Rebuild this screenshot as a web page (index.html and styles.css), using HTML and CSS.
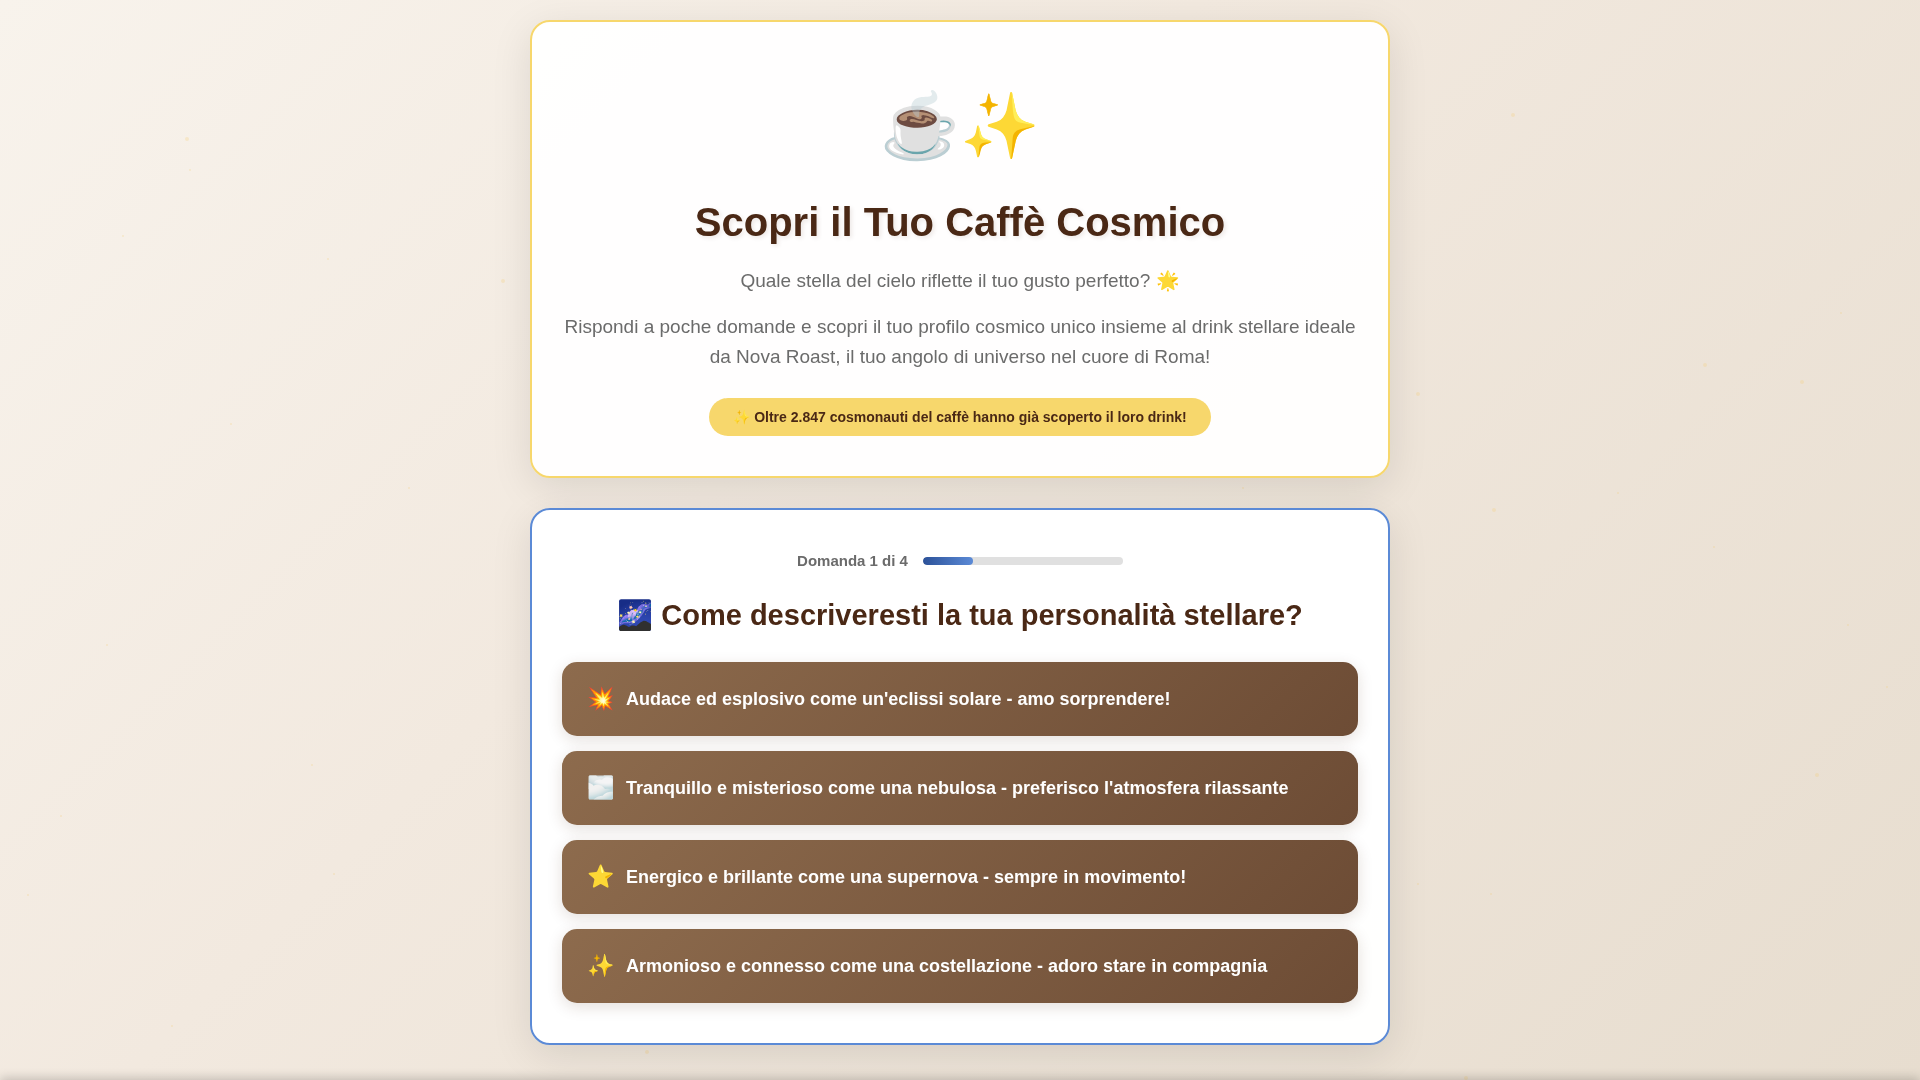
FILE: index.html
```
<!DOCTYPE html>
<html lang="it">
<head>
<meta charset="UTF-8">
<meta name="viewport" content="width=device-width, initial-scale=1.0">
<title>Scopri il Tuo Caffè Cosmico</title>
<link rel="stylesheet" href="styles.css">
</head>
<body>
  <!-- stelle di sfondo -->
  <svg class="stars" aria-hidden="true">
    <circle cx="187" cy="139" r="2"/><circle cx="190" cy="170" r="1"/>
    <circle cx="123" cy="236" r="1"/><circle cx="328" cy="259" r="1"/>
    <circle cx="503" cy="281" r="2"/><circle cx="231" cy="424" r="1"/>
    <circle cx="409" cy="488" r="1"/><circle cx="1513" cy="115" r="2"/>
    <circle cx="1841" cy="313" r="1"/><circle cx="1705" cy="365" r="2"/>
    <circle cx="1802" cy="382" r="2"/><circle cx="1418" cy="394" r="2"/>
    <circle cx="1618" cy="493" r="1"/><circle cx="1494" cy="510" r="2"/>
    <circle cx="1714" cy="547" r="1"/><circle cx="107" cy="645" r="1"/>
    <circle cx="312" cy="765" r="1"/><circle cx="61" cy="816" r="1"/>
    <circle cx="334" cy="874" r="1"/><circle cx="28" cy="895" r="1"/>
    <circle cx="172" cy="1026" r="1"/><circle cx="1848" cy="625" r="1"/>
    <circle cx="1887" cy="687" r="1"/><circle cx="1817" cy="775" r="2"/>
    <circle cx="1418" cy="884" r="1"/><circle cx="1491" cy="894" r="1"/>
    <circle cx="1466" cy="1078" r="2"/><circle cx="1243" cy="488" r="1"/>
    <circle cx="647" cy="1052" r="2"/>
  </svg>

  <main class="container">
    <header class="hero">
      <div class="hero-icon">☕✨</div>
      <h1>Scopri il Tuo Caffè Cosmico</h1>
      <p>Quale stella del cielo riflette il tuo gusto perfetto? 🌟</p>
      <p>Rispondi a poche domande e scopri il tuo profilo cosmico unico insieme al drink stellare ideale da Nova Roast, il tuo angolo di universo nel cuore di Roma!</p>
      <div class="badge">✨ Oltre 2.847 cosmonauti del caffè hanno già scoperto il loro drink!</div>
    </header>

    <section class="quiz">
      <div class="progress">
        <span>Domanda 1 di 4</span>
        <div class="progress-bar"><div class="progress-fill"></div></div>
      </div>
      <h2>🌌 Come descriveresti la tua personalità stellare?</h2>
      <div class="options">
        <button class="option"><span class="emoji">💥</span><span>Audace ed esplosivo come un'eclissi solare - amo sorprendere!</span></button>
        <button class="option"><span class="emoji">🌫️</span><span>Tranquillo e misterioso come una nebulosa - preferisco l'atmosfera rilassante</span></button>
        <button class="option"><span class="emoji">⭐</span><span>Energico e brillante come una supernova - sempre in movimento!</span></button>
        <button class="option"><span class="emoji">✨</span><span>Armonioso e connesso come una costellazione - adoro stare in compagnia</span></button>
      </div>
    </section>
  </main>
  <div class="bottom-shadow"></div>
</body>
</html>
```

FILE: styles.css
```
* { margin: 0; padding: 0; box-sizing: border-box; }

body {
  min-height: 100vh;
  font-family: "Liberation Sans", Arial, sans-serif;
  line-height: 1.6;
  color: #4a2815;
  background: linear-gradient(135deg, #f8f3ec 0%, #f2e9df 40%, #e7ddcf 100%) fixed;
}

/* stelle */
.stars {
  position: fixed;
  inset: 0;
  width: 100%;
  height: 100%;
  fill: #f5c96c;
  opacity: 0.25;
  pointer-events: none;
}

.container {
  position: relative;
  max-width: 900px;
  margin: 0 auto;
  padding: 20px;
}

/* intestazione */
.hero {
  padding: 53px 28px 40px;
  margin-bottom: 30px;
  text-align: center;
  background: rgba(255, 255, 255, 0.95);
  border: 2px solid #f7d76c;
  border-radius: 20px;
  box-shadow: 0 10px 40px rgba(0, 0, 0, 0.1);
}
.hero-icon {
  font-size: 64px;
  line-height: 102px;
  margin-bottom: 20px;
}
.hero h1 {
  font-size: 40px;
  line-height: 50px;
  margin-bottom: 19px;
  text-shadow: 2px 2px 4px rgba(74, 40, 21, 0.1);
}
.hero p {
  font-size: 19px;
  line-height: 30px;
  margin-bottom: 16px;
  color: #6b6b6b;
}
.badge {
  display: inline-block;
  padding: 8px 24px;
  margin-top: 10px;
  font-size: 14px;
  font-weight: bold;
  line-height: 22px;
  background: #f7d76c;
  border-radius: 20px;
}

/* domanda */
.quiz {
  padding: 40px 30px;
  background: rgba(255, 255, 255, 0.98);
  border: 2px solid #5b8ad6;
  border-radius: 20px;
  box-shadow: 0 10px 40px rgba(0, 0, 0, 0.1);
}
.progress {
  display: flex;
  justify-content: center;
  align-items: center;
  gap: 15px;
  margin-bottom: 20px;
  font-size: 15px;
  font-weight: bold;
  line-height: 22px;
  color: #6b6b6b;
}
.progress-bar {
  width: 200px;
  height: 8px;
  overflow: hidden;
  background: #e0e0e0;
  border-radius: 4px;
}
.progress-fill {
  width: 25%;
  height: 100%;
  background: linear-gradient(90deg, #2c5299, #5b8ad6);
  border-radius: 4px;
}
.quiz h2 {
  margin-bottom: 24px;
  font-size: 29px;
  line-height: 46px;
  text-align: center;
}
.options { display: grid; gap: 15px; }
.option {
  display: flex;
  align-items: center;
  gap: 12px;
  padding: 15px 25px;
  font: bold 18px/28px "Liberation Sans", Arial, sans-serif;
  text-align: left;
  color: #fff;
  background: linear-gradient(135deg, #8d6b4d, #6d4c35);
  border: none;
  border-radius: 15px;
  box-shadow: 0 4px 15px rgba(74, 40, 21, 0.15);
  cursor: pointer;
}
.emoji { font-size: 22px; line-height: 44px; }

/* ombra della barra in basso */
.bottom-shadow {
  position: fixed;
  top: 100%;
  left: 0;
  right: 0;
  height: 80px;
  box-shadow: 0 -2px 10px rgba(0, 0, 0, 0.2);
}
```
